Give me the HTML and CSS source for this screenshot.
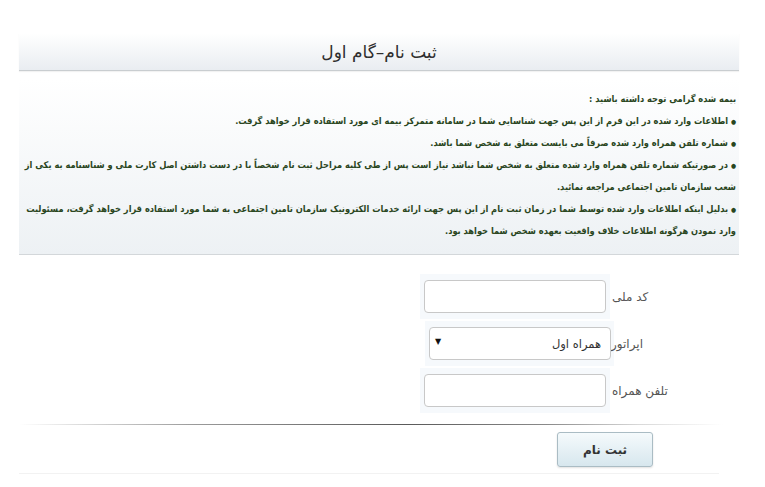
FILE: index.html
```html
<!DOCTYPE html>
<html lang="fa" dir="rtl">
<head>
<meta charset="utf-8">
<title>ثبت نام-گام اول</title>
<link rel="stylesheet" href="styles.css">
</head>
<body>
<div class="page">
  <div class="title-bar"><h1 class="title">ثبت نام–گام اول</h1></div>
  <div class="notice">
    <p class="notice-head">بیمه شده گرامی توجه داشته باشید :</p>
    <p class="notice-item"><span class="bullet">●</span> اطلاعات وارد شده در این فرم از این پس جهت شناسایی شما در سامانه متمرکز بیمه ای مورد استفاده قرار خواهد گرفت.</p>
    <p class="notice-item"><span class="bullet">●</span> شماره تلفن همراه وارد شده صرفاً می بایست متعلق به شخص شما باشد.</p>
    <p class="notice-item"><span class="bullet">●</span> در صورتیکه شماره تلفن همراه وارد شده متعلق به شخص شما نباشد نیاز است پس از طی کلیه مراحل ثبت نام شخصاً با در دست داشتن اصل کارت ملی و شناسنامه به یکی از<br>شعب سازمان تامین اجتماعی مراجعه نمائید.</p>
    <p class="notice-item"><span class="bullet">●</span> بدلیل اینکه اطلاعات وارد شده توسط شما در زمان ثبت نام از این پس جهت ارائه خدمات الکترونیک سازمان تامین اجتماعی به شما مورد استفاده قرار خواهد گرفت، مسئولیت<br>وارد نمودن هرگونه اطلاعات خلاف واقعیت بعهده شخص شما خواهد بود.</p>
  </div>
  <form class="form">
    <div class="row">
      <div class="field"><input class="input" type="text"></div>
      <label class="label">کد ملی</label>
    </div>
    <div class="row">
      <div class="field field-select">
        <div class="select-wrap">
          <select class="select"><option>همراه اول</option><option>ایرانسل</option><option>رایتل</option></select>
          <span class="arrow">▼</span>
        </div>
      </div>
      <label class="label label-tight">اپراتور</label>
    </div>
    <div class="row">
      <div class="field"><input class="input" type="text"></div>
      <label class="label">تلفن همراه</label>
    </div>
    <div class="divider"></div>
    <div class="actions">
      <button class="btn" type="button">ثبت نام</button>
    </div>
    <div class="divider-faint"></div>
  </form>
</div>
</body>
</html>
```
FILE: styles.css
```css
html, body {
  margin: 0;
  padding: 0;
  background: #ffffff;
}
body {
  font-family: "DejaVu Sans", sans-serif;
  color: #333;
}
.page {
  margin: 33px 26px 0 19px;
}
.title-bar {
  height: 37px;
  background: linear-gradient(#ffffff, #e9edf1);
  border-bottom: 1px solid #c9cdd0;
  box-shadow: 0 1px 1px rgba(0,0,0,0.05);
  display: flex;
  align-items: center;
  justify-content: center;
}
.title {
  margin: 0;
  font-size: 17px;
  font-weight: normal;
  color: #2e2e2e;
}
.notice {
  margin-top: 8px;
  padding: 9px 3px 12px 3px;
  background: linear-gradient(#ffffff, #edf1f4);
  border-bottom: 1px solid #d3d7da;
  color: #2a461e;
  font-family: "DejaVu Sans Condensed", "DejaVu Sans", sans-serif;
  font-weight: bold;
  font-size: 9.2px;
  line-height: 22px;
}
.notice p {
  margin: 0;
  white-space: nowrap;
}
.bullet {
  font-size: 6.5px;
  line-height: 1;
}
.form {
  direction: ltr;
  padding-top: 19px;
}
.row {
  display: flex;
  align-items: center;
  height: 45px;
  margin-bottom: 2px;
}
.field {
  width: 190px;
  height: 45px;
  margin-left: 401px;
  background: #f6f9fc;
  display: flex;
  align-items: center;
  justify-content: center;
  box-sizing: border-box;
}
.field-select {
  margin-left: 406px;
  width: 189px;
  justify-content: flex-start;
}
.input {
  width: 182px;
  height: 33px;
  box-sizing: border-box;
  border: 1px solid #c8c8c8;
  border-radius: 4px;
  background: #fff;
  direction: rtl;
  font-family: "DejaVu Sans", sans-serif;
  font-size: 12px;
}
.select-wrap {
  position: relative;
  width: 182px;
  height: 33px;
  margin-left: 4px;
}
.select {
  appearance: none;
  -webkit-appearance: none;
  width: 100%;
  height: 100%;
  box-sizing: border-box;
  border: 1px solid #c8c8c8;
  border-radius: 4px;
  background: #fff;
  direction: rtl;
  padding: 0 9px 0 20px;
  font-family: "DejaVu Sans", sans-serif;
  font-size: 11.5px;
  color: #333;
}
.arrow {
  position: absolute;
  left: 6px;
  top: 10px;
  font-size: 8px;
  color: #111;
  pointer-events: none;
}
.label {
  direction: rtl;
  margin-left: 2px;
  font-size: 12px;
  color: #555;
}
.label-tight {
  margin-left: -3px;
}
.divider {
  height: 1px;
  margin-top: 11px;
  width: 704px;
  background: linear-gradient(to right, rgba(120,120,120,0) 0%, #9a9a9a 25%, #5a5a5a 55%, #8a8a8a 75%, #d8d8d8 88%, rgba(220,220,220,0) 100%);
}
.actions {
  display: flex;
  padding-left: 538px;
  padding-top: 7px;
}
.btn {
  width: 96px;
  height: 35px;
  border: 1px solid #aabcc4;
  border-radius: 3px;
  background: linear-gradient(#f5fafc, #d7e7ee);
  box-shadow: 0 1px 2px rgba(0,0,0,0.12);
  font-family: "DejaVu Sans", sans-serif;
  font-weight: bold;
  font-size: 12px;
  color: #333;
  direction: rtl;
  cursor: pointer;
}
.divider-faint {
  height: 1px;
  width: 700px;
  margin-top: 6px;
  background: #f2f2f2;
}
```
